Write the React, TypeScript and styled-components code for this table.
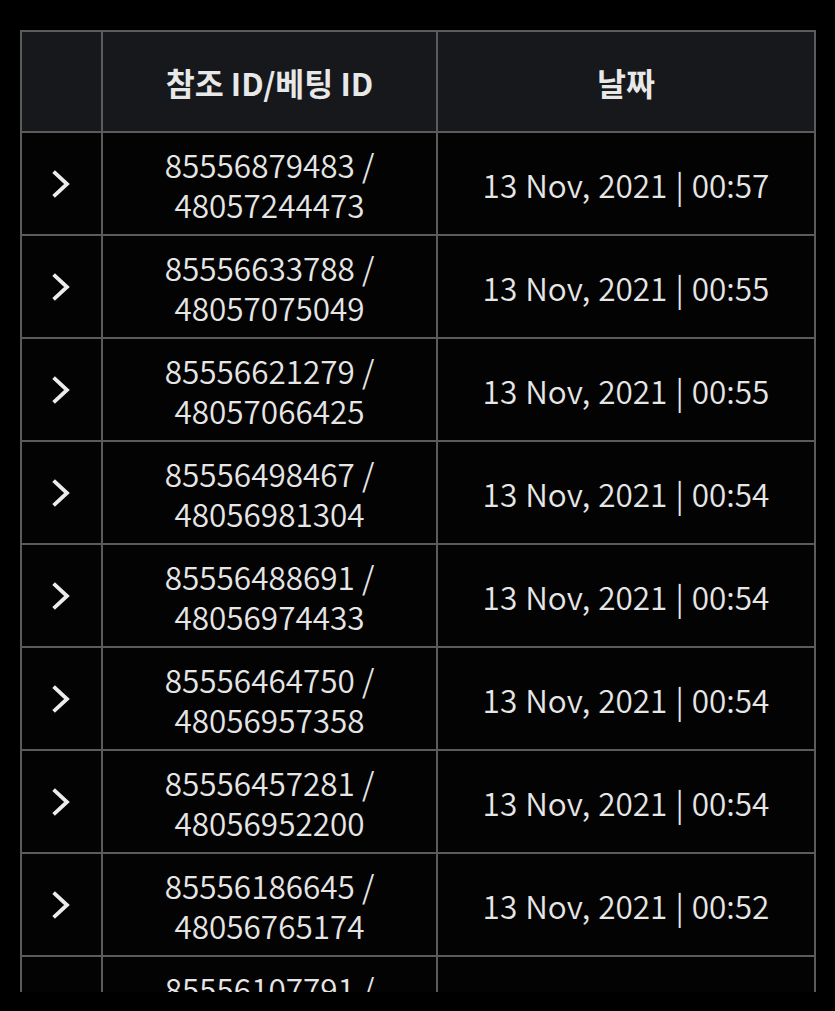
import React from 'react';
import styled, { createGlobalStyle } from 'styled-components';

const GlobalStyle = createGlobalStyle`
  html, body {
    margin: 0;
    padding: 0;
    background: #000;
  }
  body {
    font-family: "Noto Sans CJK KR", "Noto Sans", sans-serif;
    color: #e6e6e6;
  }
`;

const Page = styled.div`
  padding: 30px 19px 0 20px;
  height: 962px;
  overflow: hidden;
  background: #000;
`;

const Table = styled.table`
  width: 796px;
  table-layout: fixed;
  border-collapse: collapse;
  border: 2px solid #5b5b5b;
`;

const HeadCell = styled.th`
  height: 99px;
  padding: 0;
  background: #17181b;
  border: 2px solid #5b5b5b;
  font-size: 31.5px;
  font-weight: 700;
  color: #e8e8e8;
  text-align: center;
  vertical-align: middle;
`;

const Cell = styled.td`
  height: 101px;
  padding: 0;
  background: #030303;
  border: 2px solid #5b5b5b;
  font-size: 31.5px;
  font-weight: 350;
  line-height: 40px;
  color: #e6e6e6;
  text-align: center;
  vertical-align: middle;
`;

const DateText = styled.span`
  word-spacing: 1px;
`;

const Chevron = styled.svg`
  display: block;
  margin: 0 auto;
  width: 20px;
  height: 30px;
`;

interface Bet {
  refId: string;
  betId: string;
  date: string;
}

const bets: Bet[] = [
  { refId: '85556879483', betId: '48057244473', date: '13 Nov, 2021 | 00:57' },
  { refId: '85556633788', betId: '48057075049', date: '13 Nov, 2021 | 00:55' },
  { refId: '85556621279', betId: '48057066425', date: '13 Nov, 2021 | 00:55' },
  { refId: '85556498467', betId: '48056981304', date: '13 Nov, 2021 | 00:54' },
  { refId: '85556488691', betId: '48056974433', date: '13 Nov, 2021 | 00:54' },
  { refId: '85556464750', betId: '48056957358', date: '13 Nov, 2021 | 00:54' },
  { refId: '85556457281', betId: '48056952200', date: '13 Nov, 2021 | 00:54' },
  { refId: '85556186645', betId: '48056765174', date: '13 Nov, 2021 | 00:52' },
  { refId: '85556107791', betId: '48056711082', date: '13 Nov, 2021 | 00:51' },
];

const ChevronIcon = () => (
  <Chevron viewBox="0 0 20 30">
    <path d="M3 4 L15 15 L3 26" fill="none" stroke="#ececec" strokeWidth="3.8" strokeLinecap="square" />
  </Chevron>
);

export default function App() {
  return (
    <>
      <GlobalStyle />
      <Page>
        <Table>
          <colgroup>
            <col style={{ width: 81 }} />
            <col style={{ width: 335 }} />
            <col />
          </colgroup>
          <thead>
            <tr>
              <HeadCell />
              <HeadCell>참조 ID/베팅 ID</HeadCell>
              <HeadCell>날짜</HeadCell>
            </tr>
          </thead>
          <tbody>
            {bets.map((bet) => (
              <tr key={bet.refId}>
                <Cell>
                  <ChevronIcon />
                </Cell>
                <Cell>
                  {bet.refId} /
                  <br />
                  {bet.betId}
                </Cell>
                <Cell>
                  <DateText>{bet.date}</DateText>
                </Cell>
              </tr>
            ))}
          </tbody>
        </Table>
      </Page>
    </>
  );
}
